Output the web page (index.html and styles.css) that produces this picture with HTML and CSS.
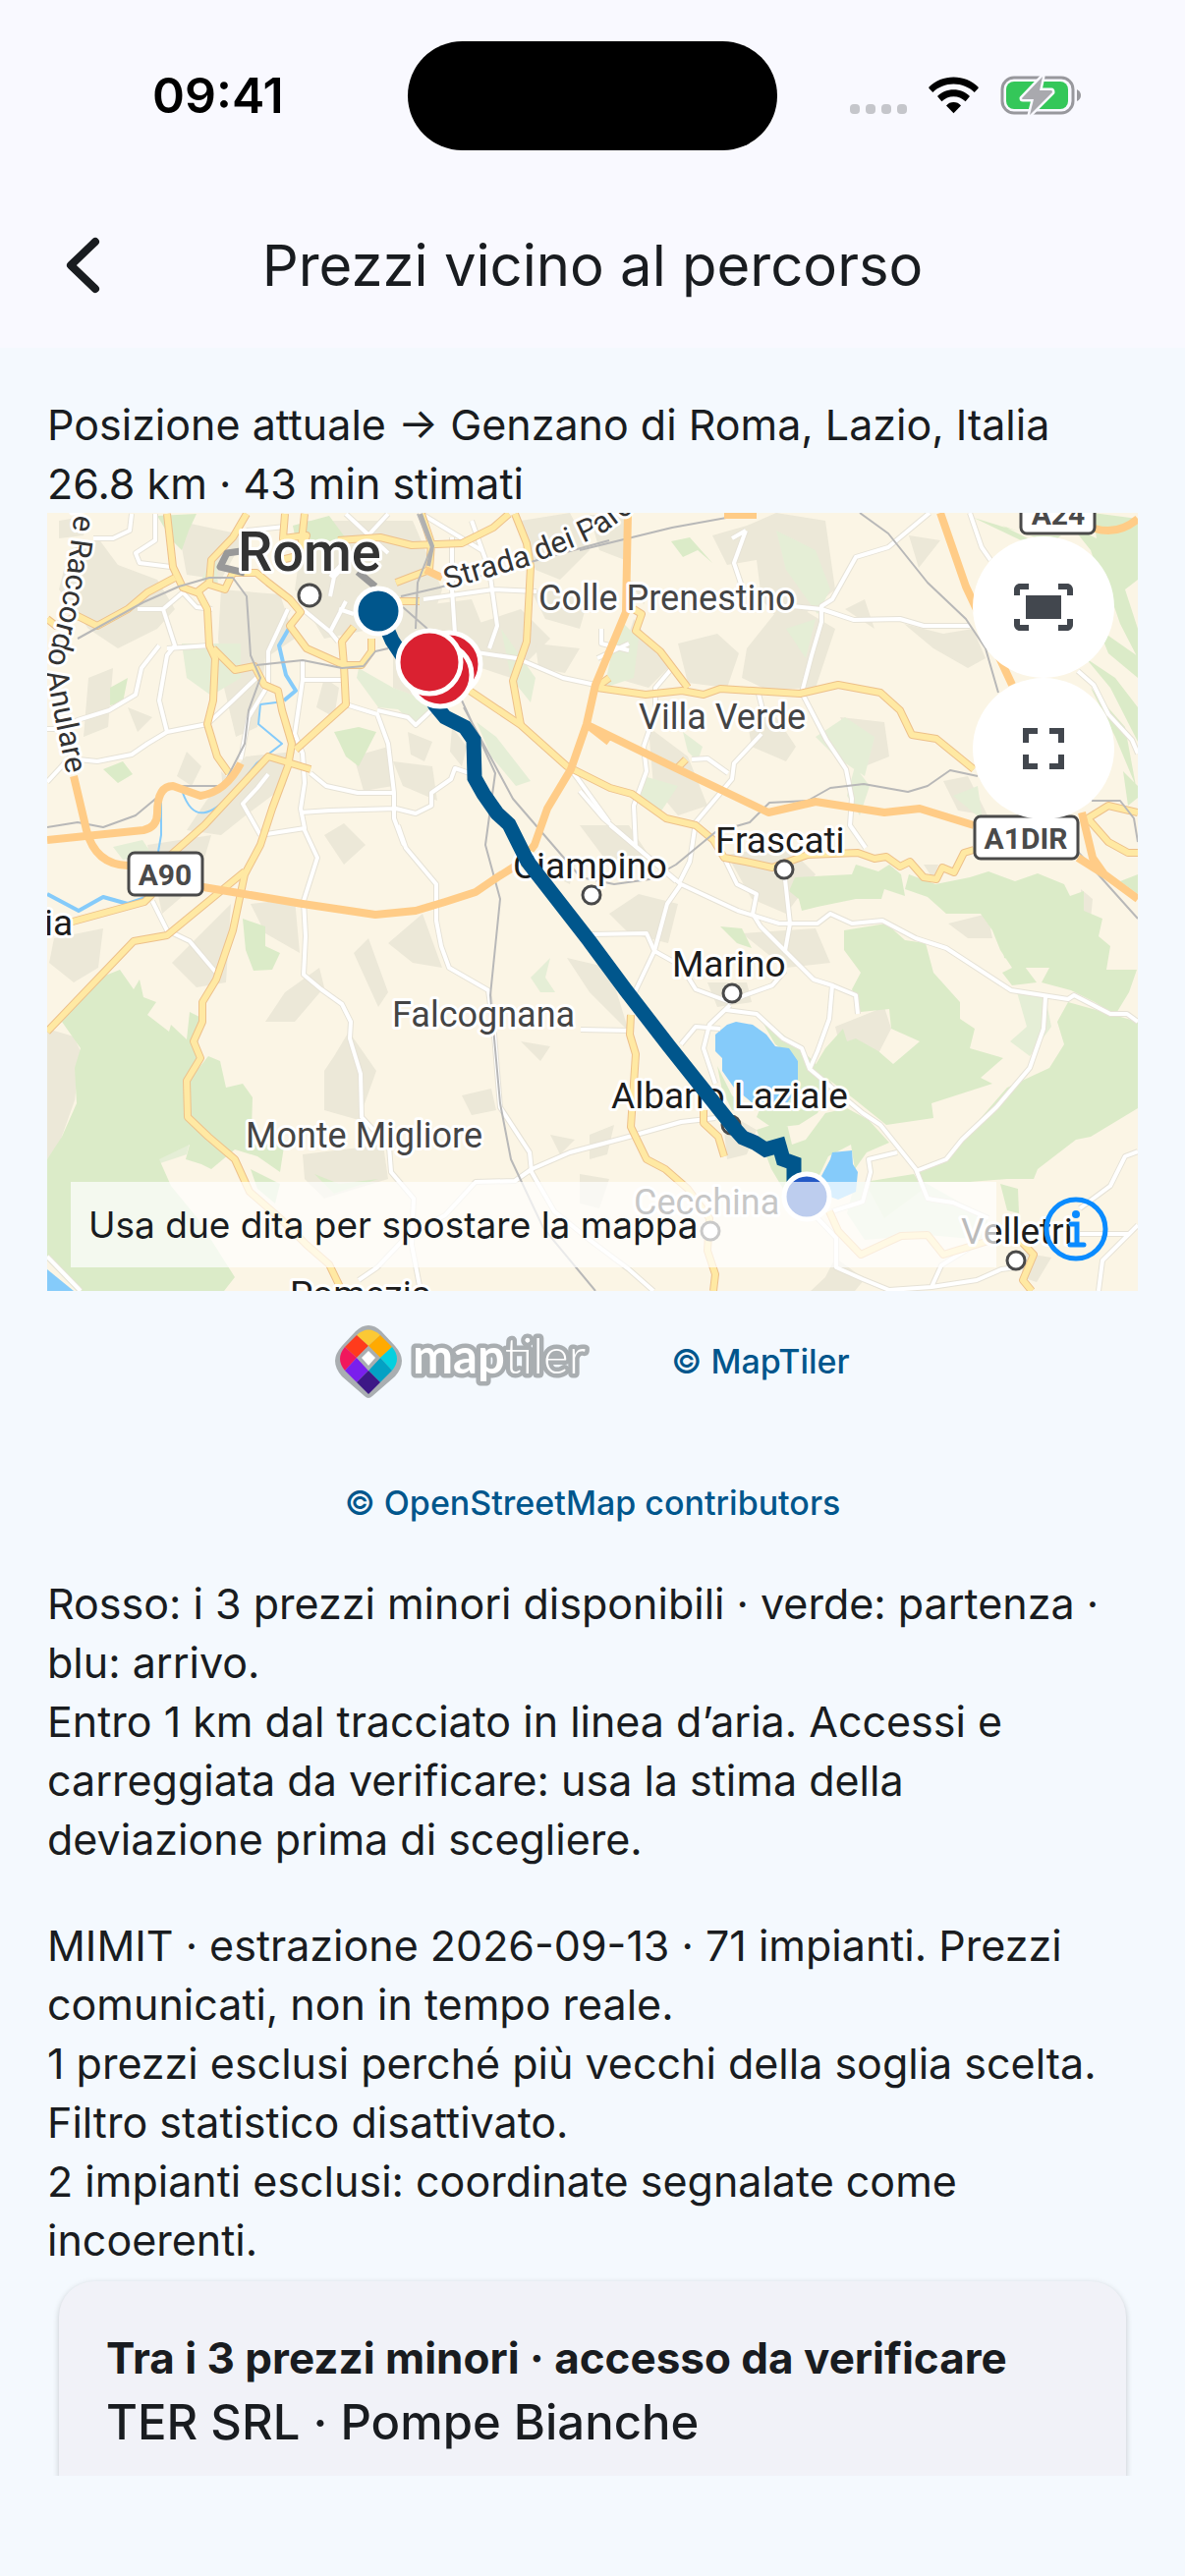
FILE: index.html
```html
<!DOCTYPE html>
<html lang="it">
<head>
  <meta charset="UTF-8">
  <meta name="viewport" content="width=device-width, initial-scale=1.0">
  <title>Prezzi vicino al percorso</title>
  <link rel="stylesheet" href="styles.css">
</head>
<body>
  <!-- Status bar -->
  <div class="status-bar">
    <div class="status-time">09:41</div>
    <div class="island"></div>
    <div class="status-icons">
      <svg class="icon-dots" viewBox="0 0 58 10" aria-hidden="true">
        <rect x="0" width="10" height="10" rx="4"/><rect x="16" width="10" height="10" rx="4"/><rect x="32" width="10" height="10" rx="4"/><rect x="48" width="10" height="10" rx="4"/>
      </svg>
      <svg class="icon-wifi" viewBox="0 0 51 38" aria-hidden="true">
        <path d="M25.500 0.500C35 0.500 44 4 50.500 10.500Q51 11.200 50.500 12L46.700 16C41 10.500 33.500 7.500 25.500 7.500S10 10.500 4.300 16L0.500 12Q0 11.200 0.500 10.500C7 4 16 0.500 25.500 0.500Z"/>
        <path d="M25.500 13.200C32 13.200 38 15.700 42 20L37.600 25.200C34.400 22.300 30 20.300 25.500 20.300S16.600 22.300 13.400 25.200L9 20C13 15.700 19 13.200 25.500 13.200Z"/>
        <path d="M25.500 26C28.500 26 31 27.200 33 29.400L25.500 37.200L18 29.400C20 27.200 22.500 26 25.500 26Z"/>
      </svg>
      <svg class="icon-battery" viewBox="0 0 82 42" aria-hidden="true">
        <rect class="battery-case" x="2" y="3" width="72" height="36" rx="12"/>
        <path class="battery-tip" d="M78 15q4 2 4 6t-4 6z"/>
        <rect class="battery-level" x="6" y="7" width="63" height="28" rx="8"/>
        <path class="battery-bolt" d="M43 2L22 24q0 1 1 1h11l-4 16L53 18q0-2-1-2H40z"/>
      </svg>
    </div>
  </div>

  <!-- App bar -->
  <header class="app-bar">
    <button type="button" class="back" aria-label="Indietro">
      <svg viewBox="0 0 36 58" aria-hidden="true"><path d="M31 5L6 29l25 24"/></svg>
    </button>
    <h1>Prezzi vicino al percorso</h1>
  </header>

  <main>
    <p>Posizione attuale → Genzano di Roma, Lazio, Italia<br>26.8 km · 43 min stimati</p>

    <!-- Map -->
    <div class="map">
      <svg class="map-canvas" viewBox="48 522 1110 792" preserveAspectRatio="xMidYMid slice" role="img" aria-label="Mappa del percorso">
        <defs>
          <g id="minor">
            <path d="M309 843L323 873L309 917L311 953L309 992L327 1007L348 1022L357 1040L356 1057L367 1093L368 1137L396 1167L398 1193L421 1220L419 1267L428 1314"/>
            <path d="M405 840L413 863L444 900L444 937L449 963L457 985L497 1008L503 1053L509 1127L539 1173L541 1193L564 1233L600 1262L640 1292L665 1314"/>
            <path d="M365 1303L384 1290L415 1257L453 1237L484 1203L524 1202L541 1190L580 1173L640 1157L693 1142L728 1138"/>
            <path d="M155 917L170 947L193 958L220 990M591 1048L642 1049M48 1279L82 1314"/>
            <path d="M621 840L693 900L751 927L793 940L832 940L845 930L867 940L898 937L932 955L963 965L1029 1008L1087 1017L1093 1013L1130 1032H1147L1158 1040"/>
            <path d="M1064 1015L1062 1047L1048 1087L1014 1127L979 1160L963 1180L932 1192"/>
            <path d="M799 895L804 940L799 968L828 997L847 1003L844 1037L832 1070L824 1088L878 1133L896 1145L932 1190L944 1220L970 1224L1006 1240"/>
            <path d="M847 1003L871 1013L873 1032M600 951L658 950L666 968L693 983L708 1007L743 1020L758 1013L786 1003L799 988"/>
            <path d="M693 900L679 920L666 968L646 1010M737 873L750 900L770 910L766 930L774 943L799 968"/>
            <path d="M739 1028L770 1032L797 1057L816 1067L824 1088M743 1023L722 1043L716 1067L728 1103M733 1047L708 1045L693 1063"/>
            <path d="M832 1240L851 1260V1290L878 1302L905 1313L948 1310L994 1303L1019 1292L1034 1290M948 1310L958 1288L1000 1262"/>
            <path d="M847 1233L878 1223L886 1193L884 1180L913 1173M1158 1172L1145 1177L1130 1207L1099 1230M1099 1256H1149L1158 1247M1149 1256L1122 1283L1118 1314"/>
            <path d="M946 522L904 557L871 567L847 610L836 617V633L826 667L816 705L841 753L861 783L867 813L865 840L881 863"/>
            <path d="M806 617L836 620L869 631L916 630L940 637H987M759 540L747 573L755 597M745 548L759 540"/>
            <path d="M1097 683L1113 697L1128 727L1152 753L1158 767M987 522L999 557L1008 570"/>
            <path d="M590 805L614 833L649 863L688 897M775 747L747 777L745 793L708 837L702 877L692 897M704 773L720 772L741 787M655 760L658 785L645 820L647 863M684 680L667 700V725L655 760M771 702L778 730"/>
            <path d="M134 523L132 540L115 548H95M158 523V550L138 563L142 573L174 577M186 603L166 620L178 657L170 667L162 713L170 745L211 737"/>
            <path d="M162 657L144 680L138 707L111 723L79 733L63 742H48M170 745L150 757L134 768L99 775L70 772L48 796M170 660L213 657M140 620H166"/>
            <path d="M211 737L237 713L261 690M293 620L273 663V697L253 730L245 773M308 673L308 692L300 747L308 767L310 797L306 823L310 843L265 850M308 692H348"/>
            <path d="M306 827L336 825L403 823L423 828L439 820V807L459 793L463 782L478 787M316 787L332 800L364 807L401 807L395 757L384 727L352 717M401 807V833L411 860M273 788L262 802L247 818L265 850"/>
            <path d="M384 723L415 730L423 738L439 723M431 610L502 600L546 602M478 663L526 670L573 690L620 700M480 530L486 547L498 580L506 637L498 660"/>
            <path d="M352 523L395 563M395 523L336 587M336 607L340 587L378 547M308 620L336 643L352 612M336 643L344 653M251 540L290 536M345 620L360 625M460 547V600L464 660M429 523L490 560M186 603L200 618L216 620M608 670L640 655M612 640V655L640 662"/>
            <path d="M581 783L620 837"/>
          </g>
          <g id="major">
            <path d="M170 523L176 577L186 598L200 603L213 593L215 570L237 547L251 523"/>
            <path d="M48 630L57 637L79 627L99 637L130 620L150 603L178 588"/>
            <path d="M202 603L211 620L213 657L219 670L217 713L211 737L221 770L233 787"/>
            <path d="M217 660L239 682L259 678L269 697L283 703L287 723L297 757L293 780L277 823L265 860L249 890L237 947L220 997L206 1020V1040L197 1060L204 1077L190 1100L191 1137L212 1157L239 1180L254 1213L285 1240L312 1267L335 1287L348 1314"/>
            <path d="M301 763L352 717L350 677L348 653L360 638M350 677H368L378 663V650M350 677L312 660L295 637L306 623L295 610L273 593L261 583L237 583L229 600L213 595"/>
            <path d="M48 1050L136 958L170 952L249 887M155 910L147 918L74 938L48 945M174 870L208 840L273 770L316 783"/>
            <path d="M344 550L387 547L419 555L470 553L502 537L518 523M429 523L439 553L437 580L403 593M400 612H427M290 523L288 548L312 545L306 565L286 570M310 523L306 560"/>
            <path d="M524 523L536 553L540 577L536 653L522 693L530 738"/>
            <path d="M478 703L530 738L577 780L621 802L643 808L678 833L708 840L726 855L737 873L759 877L786 883L822 870L873 868L890 874L902 872L916 882L926 877L940 893L953 895L959 883L971 888L981 868L991 865"/>
            <path d="M608 700L657 707L694 703L716 707L733 701L814 706L853 697L896 705L916 723L928 748L953 752L991 783M645 620L653 625L647 642L672 663L700 700M688 783L698 773M609 698L620 690"/>
            <path d="M642 1033L641 1053L647 1073L642 1147L658 1180L677 1190L700 1210L722 1240L720 1273L728 1297L726 1314"/>
            <path d="M844 1233L853 1253L876 1277L917 1258L944 1257L960 1277L1006 1263L1034 1258L1052 1277L1041 1303L1050 1314M716 1130V1143L731 1157L737 1177"/>
            <path d="M1107 833L1128 820L1158 827M1107 833L1128 857L1148 868H1158"/>
          </g>
          <path id="ring" d="M40 440L66 480L75 530L71 560L66 600L59 632L50 665L48 690L56 732L68 788"/>
          <path id="parchi" d="M455 600L534 577L589 555L614 543L650 516L680 490"/>
        </defs>

        <rect class="land" x="48" y="522" width="1110" height="792"/>

        <!-- built-up areas -->
        <g class="urban">
          <path d="M70 560L100 548L120 575L160 590L178 620L160 640L120 660L90 640L60 600ZM180 530L250 545L225 590L190 585ZM225 600L285 605L300 650L270 670L262 740L240 750L228 700L222 650ZM310 530L420 530L450 600L430 660L380 640L330 650L300 600Z"/>
          <path d="M400 620L480 610L500 660L450 720L400 700ZM470 640L530 620L560 650L520 690L490 680ZM90 690L115 680L110 740L85 750ZM60 530L90 525L85 545L60 548ZM250 770L300 765L290 800L250 830L225 850L190 845L210 815Z"/>
          <path d="M360 770L395 760L400 800L370 805ZM330 850L350 838L372 860L350 880ZM400 775L440 780L445 815L410 800ZM150 860L215 850L200 900L165 930ZM55 955L105 945L100 985L75 1000L50 980ZM175 980L235 920L230 1000L200 1005ZM48 1047L75 1055L82 1070L76 1120L60 1165L48 1180Z"/>
          <path d="M255 920L300 915L305 970L270 950ZM270 1040L290 1010L325 985L330 1005L300 1040ZM360 970L375 955L395 1010L385 1025ZM395 960L430 930L450 985L420 980ZM340 1075L355 1050L383 1090L365 1140L330 1130L330 1090ZM308 1175L390 1165L395 1200L330 1220L310 1200ZM470 1115L500 1108L505 1130L480 1135ZM577 975L620 985L640 1050L600 1010Z"/>
          <path d="M530 530L580 522L600 560L570 590L545 580ZM600 524L640 524L636 570L610 560ZM725 545L760 535L790 522L840 530L850 600L800 640L775 610L770 570L740 575ZM690 655L730 645L752 665L740 700L700 695ZM760 660L800 610L850 640L830 700L780 702L755 690Z"/>
          <path d="M645 630L680 680L660 700L625 690ZM920 635L960 645L990 640L1003 670L985 680L950 660ZM925 545L957 550L935 578ZM760 730L790 730L810 760L800 775L765 760ZM855 730L900 735L905 770L880 780ZM960 795L985 790L1005 830L975 825ZM660 740L700 770L720 820L690 830L665 800Z"/>
          <path d="M740 870L800 860L830 890L800 930L765 915ZM620 930L650 910L690 920L680 960L640 950ZM755 950L830 945L845 980L800 985L780 970ZM590 840L640 840L660 870L620 880ZM850 1045L900 1025L907 1047L890 1080L855 1065ZM965 940L1005 930L1010 955L985 955ZM735 1130L770 1150L760 1175L740 1180ZM720 1000L760 1000L765 1020L730 1025Z"/>
          <path d="M840 1300L850 1280L880 1302L870 1314H825ZM600 1155L625 1145L618 1175L600 1180ZM1040 1275L1070 1280L1055 1305L1040 1300ZM560 1155L585 1160L570 1175ZM590 1195L620 1200L610 1230L590 1225ZM860 620L880 610L890 640ZM1100 905L1112 915L1110 935L1100 930ZM940 880L955 880L950 895Z"/>
          <path d="M330 690L345 700L340 730L322 720ZM190 765L205 780L195 800L180 790ZM225 785L240 800L228 812ZM320 560L350 575L345 600L322 590ZM540 600L600 605L590 640L555 630ZM545 655L590 660L575 685L548 680ZM460 740L475 760L470 780L458 765ZM130 720L155 730L140 745ZM415 745L440 755L432 775L418 768ZM640 590L665 600L655 615ZM530 1060L560 1065L550 1080ZM560 890L585 880L580 900Z"/>
        </g>
        <!-- parks -->
        <g class="park">
          <path d="M185 655L245 655L245 690L215 708L190 690ZM365 680L400 700L440 715L425 740L405 722L385 720L363 690ZM485 735L505 750L540 795L525 800L500 770ZM630 630L650 650L645 690L615 700ZM790 540L830 560L845 600L832 625L800 580ZM800 640L830 630L820 670ZM830 750L860 730L890 750L880 790L850 770ZM870 780L885 800L875 830L862 810ZM655 790L690 800L670 830L650 815ZM695 745L715 760L710 775L700 765ZM970 810L995 800L1000 835ZM510 640L545 690L540 715L520 690ZM540 995L560 975L555 995L565 1010L550 1010ZM205 590L220 560L222 600Z"/>
          <path d="M150 1145L195 1155L190 1175L160 1185ZM1035 1010L1064 1015L1070 1045L1048 1075L1028 1060L1045 1045ZM870 1203H940L1006 1240L1000 1262L944 1257L880 1262L862 1235ZM115 862L145 855L155 870L125 875Z"/>
        </g>
        <!-- woods -->
        <g class="wood">
          <path d="M63 1040L97 997L122 987L136 1007L142 997L146 1015L159 1020L150 1033L172 1050L174 1043L190 1058L193 1030L203 1035L200 1090L212 1075L224 1080L230 1107L247 1103L257 1117L256 1150L270 1157L289 1167L285 1193L262 1177L239 1170L215 1190L205 1185L189 1180L193 1165L162 1180L174 1207L201 1240L220 1270L239 1300L228 1314H78L48 1283V1180L63 1157L78 1123L76 1087L82 1067Z"/>
          <path d="M247 935L270 943V963L285 970L277 987L258 988L250 967ZM160 525L200 523L192 540L185 560L175 550ZM298 535L335 525L352 548L330 552L300 545ZM340 745L365 740L383 745L365 780L352 770L345 755ZM112 700L130 690L125 715L112 718ZM105 783L125 775L135 788L120 797ZM683 551L702 547L725 573L710 560L695 567ZM733 943L755 945L765 965L750 960Z"/>
          <path d="M809 893L867 890L871 880L894 887L905 880L917 890L921 912L900 905L897 915L871 915L832 923L816 927L813 915L803 907Z"/>
          <path d="M925 890L952 900L987 893L1006 887L1033 897L1056 889L1083 900L1089 912L1103 907V927L1122 935L1118 953L1130 963L1126 987L1157 987L1149 1010L1135 1033L1114 1020L1090 1008L1060 1000L1068 985L1030 985L1018 967L1010 947L998 930L963 930L944 913L921 905Z"/>
          <path d="M859 947L902 940L921 957L942 960L950 990L977 1020V1037L992 1047L987 1067L1021 1077L998 1097L1010 1103L948 1123L950 1138L902 1145L871 1120L828 1087L840 1067L858 1047L862 1060L871 1057L894 1070L909 1083L936 1060L907 1047L905 1027L876 1030L867 1007L876 990L859 967Z"/>
          <path d="M1087 1020L1130 1032L1158 1040V1128L1110 1157L1095 1160L1056 1190L1052 1200H1025L987 1203H940L932 1190L963 1180L979 1160L1025 1107L1068 1087L1083 1063L1076 1040Z"/>
          <path d="M770 1150L800 1140L806 1165L820 1160L840 1133L862 1128L884 1140L905 1163L882 1173L870 1190L866 1165L843 1177L832 1200L816 1193L820 1230L800 1215L785 1190ZM774 1037L797 1053L828 1080L847 1103L832 1133L813 1145L786 1148L770 1137L774 1127L812 1107V1080L789 1063ZM730 1085L745 1115L760 1128L745 1130L735 1110ZM1020 960L1035 965V978L1022 975ZM1020 990L1040 980L1055 1000L1030 1003ZM1018 1205L1036 1210L1037 1235L1025 1232ZM255 1190L285 1205L280 1225L262 1210ZM320 1195L345 1205L385 1200L340 1215ZM1140 897L1158 890V910ZM880 1203L930 1195L940 1210L900 1240Z"/>
          <path d="M991 527L1060 560L1080 545L1050 545ZM1020 535L1090 560L1110 580ZM1090 535L1116 548L1112 522L1158 528V590L1145 600L1158 640V670L1140 635L1128 600L1135 620L1120 590L1110 560ZM1118 640L1158 668V690L1128 665ZM1105 670L1135 690L1158 720V755L1130 700ZM1110 700L1145 740L1156 800L1135 750ZM1143 785L1158 800V812L1148 820Z"/>
        </g>
        <!-- water -->
        <g class="water">
          <path d="M728 1053L740 1043L749 1040L766 1043L780 1053L789 1065L803 1067L812 1080V1107L801 1123H766L747 1107L735 1090V1077L728 1070Z"/>
          <path d="M847 1173L867 1171L868 1185L873 1193L871 1213L853 1221L842 1217L836 1197L845 1180Z"/>
          <path d="M48 1292L75 1314H48Z"/>
        </g>
        <g class="river">
          <path d="M295 638L284 657L291 687L301 703L289 713M48 910L80 927L105 913L130 920L151 913"/>
          <path class="thin" d="M289 714L265 717L263 737L287 757L261 777L237 807C215 830 197 838 186 807M164 810V850L161 867"/>
        </g>

        <!-- roads -->
        <use href="#minor" class="minor-case"/>
        <use href="#minor" class="minor"/>
        <use href="#major" class="major-case"/>
        <use href="#major" class="major"/>
        <g class="rail">
          <path d="M79 650L146 613L182 597L213 588H237L251 607L255 667L265 690L253 723L249 757L227 800H174L138 830L105 842L79 837L48 842"/>
          <path d="M261 677L308 672L348 680L370 678L382 663L395 660M425 523L439 557L425 593L423 640M620 550L540 572L447 598L408 607M410 618L435 640"/>
          <path d="M470 713L504 787L494 860L509 915L499 1013L509 1123L520 1180L553 1250L606 1314M472 720L522 813L591 893L625 900L661 895L688 880L728 847L763 837L783 817L822 815L845 802L879 798L924 806L944 800L967 784L995 790"/>
          <path d="M590 560L684 537L767 522M875 522L904 543L944 593L983 630L1003 660L1016 705M1111 815H1140L1154 833L1158 857M1097 867L1158 935"/>
        </g>
        <g class="motorway">
          <path d="M75 790L88 845Q97 880 130 881L207 903L243 909L308 920L382 931L423 927L453 918L484 908L503 895L530 878L544 860L557 823L581 783L597 737L606 697L637 623L639 522"/>
          <path d="M48 855L146 845Q160 842 160 828Q160 800 176 800L204 810Q230 806 245 777M598 738L688 782L782 827L830 816L900 827L936 823L991 840M597 737L620 755"/>
          <path d="M957 522L983 597L1030 697M1101 827L1112 873L1124 890L1158 915M1097 873L1124 890M1114 538Q1138 545 1158 528M737 524H770M433 580L450 588"/>
        </g>
        <g class="walls">
          <path d="M245 561L231 563L224 577L249 583M364 582L382 597"/>
          <path class="thin" d="M428 523L440 556L436 576"/>
        </g>

        <!-- labels -->
        <g class="town-dot">
          <circle cx="315" cy="606" r="11"/><circle cx="798" cy="885" r="9"/><circle cx="602" cy="911" r="9"/><circle cx="745" cy="1011" r="9"/><circle cx="744" cy="1145" r="9"/><circle cx="723" cy="1253" r="9"/><circle cx="1034" cy="1283" r="9"/>
        </g>
        <text class="city" x="242" y="581">Rome</text>
        <g class="suburb">
          <text x="548" y="621">Colle Prenestino</text>
          <text x="650" y="742">Villa Verde</text>
          <text x="399" y="1045">Falcognana</text>
          <text x="250" y="1168">Monte Migliore</text>
          <text x="645" y="1236">Cecchina</text>
        </g>
        <g class="town">
          <text x="728" y="868">Frascati</text>
          <text x="522" y="894">Ciampino</text>
          <text x="684" y="994">Marino</text>
          <text x="622" y="1128">Albano Laziale</text>
          <text x="978" y="1266">Velletri</text>
          <text x="295" y="1330">Pomezia</text>
          <text x="45" y="952">ia</text>
        </g>
        <g class="road-name">
          <text text-anchor="end"><textPath href="#ring" startOffset="100%">Grande Raccordo Anulare</textPath></text>
          <text><textPath href="#parchi">Strada dei Parchi</textPath></text>
        </g>
        <g class="shield">
          <rect x="131" y="868" width="75" height="43" rx="6"/><text x="168" y="901">A90</text>
          <rect x="992" y="831" width="105" height="43" rx="6"/><text x="1044" y="864">A1DIR</text>
          <rect x="1039" y="500" width="75" height="43" rx="6"/><text x="1077" y="534">A24</text>
        </g>

        <!-- route and markers -->
        <path class="route" d="M386 622L399 652L443 718L453 730L473 740L482 753L483 792L492 808L506 828L518 839L537 877L551 895L600 958L637 1008L681 1065L747 1148L756 1158L768 1163L779 1170L793 1166L797 1180L808 1184V1200L821 1218"/>
        <circle class="marker start" cx="385" cy="622" r="23"/>
        <circle class="marker end" cx="821" cy="1218" r="23"/>
        <circle class="marker price" cx="457" cy="676" r="32"/>
        <circle class="marker price" cx="448" cy="687" r="32"/>
        <circle class="marker price" cx="437" cy="674" r="32"/>
      </svg>

      <div class="map-controls">
        <button type="button" aria-label="Adatta alla mappa">
          <svg viewBox="0 0 24 24" aria-hidden="true"><path d="M17 4h3c1.100 0 2 .9 2 2v2h-2V6h-3V4zM4 8V6h3V4H4c-1.100 0-2 .9-2 2v2h2zm16 8v2h-3v2h3c1.100 0 2-.9 2-2v-2h-2zM7 18H4v-2H2v2c0 1.100.9 2 2 2h3v-2zM18 8H6v8h12V8z"/></svg>
        </button>
        <button type="button" aria-label="Schermo intero">
          <svg viewBox="0 0 24 24" aria-hidden="true"><path d="M7 14H5v5h5v-2H7v-3zm-2-4h2V7h3V5H5v5zm12 7h-3v2h5v-5h-2v3zM14 5v2h3v3h2V5h-5z"/></svg>
        </button>
      </div>
      <div class="map-hint">Usa due dita per spostare la mappa</div>
      <button type="button" class="map-info" aria-label="Informazioni">
        <svg viewBox="0 0 66 66" aria-hidden="true">
          <circle cx="33" cy="33" r="30"/>
          <circle class="dot" cx="33" cy="18" r="4"/>
          <path d="M28 28h6v21M27 49h14"/>
        </svg>
      </button>
    </div>

    <!-- Attribution -->
    <div class="credits">
      <a href="#" class="logo" aria-label="MapTiler">
        <svg viewBox="0 0 266 76" aria-hidden="true">
          <path class="pin-back" d="M34 1Q41 1 47 7L61 22Q68 30 68 37Q68 45 61 53L38 73Q34 77 30 73L7 53Q0 45 0 37Q0 30 7 22L21 7Q27 1 34 1Z"/>
          <path fill="#fbc935" d="M22 11Q34 0 46 11L34 22Z"/>
          <path fill="#ffaa01" d="M46 11L58 23L46 34L34 22Z"/>
          <path fill="#ff3b1c" d="M22 11L34 22L22 34L10 23Z"/>
          <path fill="#f1175d" d="M10 23L22 34L10 47Q0 35 10 23Z"/>
          <path fill="#05d0df" d="M58 23Q68 35 58 47L46 34Z"/>
          <path fill="#7a1fec" d="M22 34L34 47L22 59L10 47Z"/>
          <path fill="#03a1c4" d="M46 34L58 47L46 59L34 47Z"/>
          <path fill="#3d1886" d="M34 47L46 59L34 71L22 59Z"/>
          <path class="pin-back" d="M34 22L46 34L34 47L22 34Z"/>
          <path fill="#fff" d="M34 27L41 34L34 42L27 34Z"/>
          <text x="79" y="50"><tspan class="bold">map</tspan><tspan class="light">tiler</tspan></text>
        </svg>
      </a>
      <a href="#">© MapTiler</a>
      <a href="#">© OpenStreetMap contributors</a>
    </div>

    <p>Rosso: i 3 prezzi minori disponibili · verde: partenza · blu: arrivo.<br>Entro 1 km dal tracciato in linea d’aria. Accessi e carreggiata da verificare: usa la stima della deviazione prima di scegliere.</p>
    <p class="source">MIMIT · estrazione 2026-09-13 · 71 impianti. Prezzi comunicati, non in tempo reale.<br>1 prezzi esclusi perché più vecchi della soglia scelta. Filtro statistico disattivato.<br>2 impianti esclusi: coordinate segnalate come incoerenti.</p>

    <!-- Station card -->
    <article class="card">
      <h2>Tra i 3 prezzi minori · accesso da verificare</h2>
      <h3>TER SRL · Pompe Bianche</h3>
    </article>
  </main>
</body>
</html>
```
FILE: styles.css
```css
* {
  box-sizing: border-box;
}
body {
  margin: 0;
  height: 100vh;
  display: flex;
  flex-direction: column;
  padding-bottom: 102px;
  background-color: #f4f9fe;
  color: #191c20;
  font-family: Inter, "Liberation Sans", sans-serif;
  font-size: 43px;
  line-height: 60px;
}
h1, h2, h3, p {
  margin: 0;
}
p {
  padding-right: 24px;
}
button {
  border: none;
  padding: 0;
  background: none;
  cursor: pointer;
}
a {
  color: #00568c;
  text-decoration: none;
}

/* Status bar */
.status-bar {
  flex: none;
  height: 186px;
  padding-top: 8px;
  display: grid;
  grid-template-columns: 1fr 376px 1fr;
  align-items: center;
  background-color: #f9f9ff;
}
.status-time {
  padding-left: 155px;
  color: #000;
  font-size: 50px;
  font-weight: 600;
}
.island {
  height: 111px;
  border-radius: 56px;
  background-color: #000;
}
.status-icons {
  display: flex;
  justify-content: flex-end;
  align-items: center;
  gap: 22px;
  padding-right: 106px;
}
.icon-dots {
  width: 58px;
  height: 10px;
  margin-top: 28px;
  fill: #c5c6cb;
}
.icon-wifi {
  width: 51px;
  height: 38px;
}
.icon-battery {
  width: 82px;
  height: 42px;
}
.battery-case {
  fill: none;
  stroke: #98989d;
  stroke-width: 3;
}
.battery-tip {
  fill: #98989d;
}
.battery-level {
  fill: #34c759;
}
.battery-bolt {
  fill: #a9a9ae;
  stroke: #f9f9ff;
  stroke-width: 5;
  stroke-linejoin: round;
  paint-order: stroke;
}

/* App bar */
.app-bar {
  flex: none;
  height: 168px;
  padding: 0 66px;
  display: grid;
  grid-template-columns: 36px 1fr 36px;
  align-items: center;
  background-color: #f9f9ff;
}
.back svg {
  display: block;
  width: 36px;
  height: 58px;
  fill: none;
  stroke: #191c20;
  stroke-width: 8;
  stroke-linecap: round;
  stroke-linejoin: round;
}
h1 {
  font-size: 58px;
  line-height: 84px;
  font-weight: 400;
  text-align: center;
}

main {
  flex: 1;
  min-height: 0;
  padding: 48px 48px 0;
  overflow: hidden;
}

/* Map */
.map {
  position: relative;
  overflow: hidden;
}
.map-canvas {
  display: block;
  width: 100%;
  font-family: Roboto, sans-serif;
}
.land { fill: #fbf5e5; }
.urban { fill: #ece8d8; }
.park { fill: #e5eed6; }
.wood { fill: #dbebc8; }
.water { fill: #85cbfa; }
.river, .rail, .motorway, .major, .major-case, .minor, .minor-case, .walls, .route {
  fill: none;
  stroke-linejoin: round;
}
.river { stroke: #85cbfa; stroke-width: 4; }
.river .thin { stroke-width: 2; }
.minor { stroke: #fff; stroke-width: 4; }
.minor-case { stroke: #e6e2d6; stroke-width: 6; }
.major { stroke: #ffe9a3; stroke-width: 6; }
.major-case { stroke: #edc08a; stroke-width: 8; }
.rail { stroke: #b8b8b8; stroke-width: 2; }
.motorway { stroke: #ffcc87; stroke-width: 8; }
.walls { stroke: #999; stroke-width: 7; }
.walls .thin { stroke: #b0b0b0; stroke-width: 4; }
.town-dot {
  fill: #fff;
  stroke: #4a4a4a;
  stroke-width: 3;
}
.city, .suburb, .town, .road-name {
  stroke: #fff;
  stroke-width: 6;
  stroke-linejoin: round;
  paint-order: stroke;
}
.city {
  fill: #333;
  font-size: 56px;
  font-weight: 500;
}
.suburb {
  fill: #454545;
  font-size: 36px;
}
.town {
  fill: #1c1c1c;
  font-size: 37px;
}
.road-name {
  fill: #333;
  font-size: 31px;
}
.shield rect {
  fill: #fff;
  stroke: #4a4a4a;
  stroke-width: 3;
}
.shield text {
  fill: #4a4a4a;
  font-size: 30px;
  font-weight: 700;
  text-anchor: middle;
}
.route {
  stroke: #00568c;
  stroke-width: 15;
  stroke-linejoin: miter;
}
.marker {
  stroke: #fff;
  stroke-width: 5;
}
.marker.start { fill: #00568c; }
.marker.end { fill: #2459c5; }
.marker.price { fill: #da2131; }
.map-controls {
  position: absolute;
  top: 24px;
  right: 24px;
  display: flex;
  flex-direction: column;
}
.map-controls button {
  width: 144px;
  height: 144px;
  display: flex;
  align-items: center;
  justify-content: center;
  border-radius: 50%;
  background-color: #fff;
}
.map-controls svg {
  width: 72px;
  height: 72px;
  fill: #42474e;
}
.map-hint {
  position: absolute;
  left: 24px;
  right: 144px;
  bottom: 24px;
  padding: 18px;
  background-color: rgba(255, 255, 255, 0.7);
  font-size: 37px;
  line-height: 51px;
}
.map-info {
  position: absolute;
  right: 30px;
  bottom: 30px;
}
.map-info svg {
  display: block;
  width: 66px;
  height: 66px;
  fill: none;
  stroke: #0a8bff;
  stroke-width: 5;
  stroke-linecap: round;
}
.map-info .dot {
  fill: #0a8bff;
  stroke: none;
}

/* Attribution */
.credits {
  display: flex;
  flex-wrap: wrap;
  justify-content: center;
  column-gap: 76px;
  padding: 0 120px;
  font-size: 34px;
  font-weight: 500;
  line-height: 144px;
}
.logo {
  display: flex;
  align-items: center;
}
.logo svg {
  width: 266px;
  height: 76px;
}
.pin-back {
  fill: #a9aeb1;
}
.logo text {
  fill: #fff;
  stroke: #a9aeb1;
  stroke-width: 9;
  stroke-linejoin: round;
  paint-order: stroke;
  font-family: Lato, sans-serif;
  font-size: 49px;
}
.logo .bold { font-weight: 700; }
.logo .light { font-weight: 300; }

.source {
  margin-top: 48px;
}

/* Station card */
.card {
  height: 600px;
  margin: 12px;
  padding: 48px;
  border-radius: 36px;
  background-color: #f1f2f8;
  box-shadow: 0 2px 6px rgba(0, 0, 0, 0.2);
}
h2 {
  font-size: 44px;
  line-height: 60px;
  font-weight: 700;
}
h3 {
  font-size: 49px;
  line-height: 72px;
  font-weight: 500;
}
```
